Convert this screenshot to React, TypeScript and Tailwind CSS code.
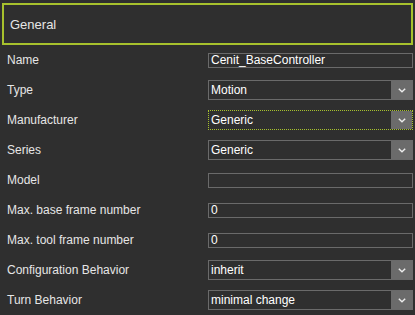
const rows: { label: string; kind: "input" | "select"; value: string; focused?: boolean }[] = [
  { label: "Name", kind: "input", value: "Cenit_BaseController" },
  { label: "Type", kind: "select", value: "Motion" },
  { label: "Manufacturer", kind: "select", value: "Generic", focused: true },
  { label: "Series", kind: "select", value: "Generic" },
  { label: "Model", kind: "input", value: "" },
  { label: "Max. base frame number", kind: "input", value: "0" },
  { label: "Max. tool frame number", kind: "input", value: "0" },
  { label: "Configuration Behavior", kind: "select", value: "inherit" },
  { label: "Turn Behavior", kind: "select", value: "minimal change" },
];

function Chevron() {
  return (
    <svg width="8" height="5" viewBox="0 0 8 5" fill="none">
      <path d="M0.8 0.8L4 3.8L7.2 0.8" stroke="#ececec" strokeWidth="1.4" />
    </svg>
  );
}

export default function App() {
  return (
    <div className="w-[415px] h-[315px] bg-[#2f2f2f] text-[#e6e6e6] text-[12px] font-['Liberation_Sans',Arial,sans-serif] overflow-hidden">
      <div className="pt-[3px] px-[2px]">
        <div className="h-[42px] border-2 border-[#a7c12d] flex items-center pl-[6px] pt-[1px] text-[13px]">General</div>
      </div>
      <div className="flex flex-col">
        {rows.map((r) => (
          <div key={r.label} className="h-[30px] flex items-center">
            <div className="w-[208px] pl-[7px] shrink-0">{r.label}</div>
            {r.kind === "input" ? (
              <div className="w-[205px] h-[15px] border border-[#6a6a6a] flex items-center pl-[2px] text-white text-[12px] leading-none">
                {r.value}
              </div>
            ) : (
              <div
                className={
                  "w-[205px] h-[20px] flex items-stretch border " +
                  (r.focused ? "border-dotted border-[#a7c12d]" : "border-[#6a6a6a]")
                }
              >
                <div className="flex-1 flex items-center pl-[2px] text-white">{r.value}</div>
                <div className="w-[21px] bg-[#6b6b6b] flex items-center justify-center">
                  <Chevron />
                </div>
              </div>
            )}
          </div>
        ))}
      </div>
    </div>
  );
}
